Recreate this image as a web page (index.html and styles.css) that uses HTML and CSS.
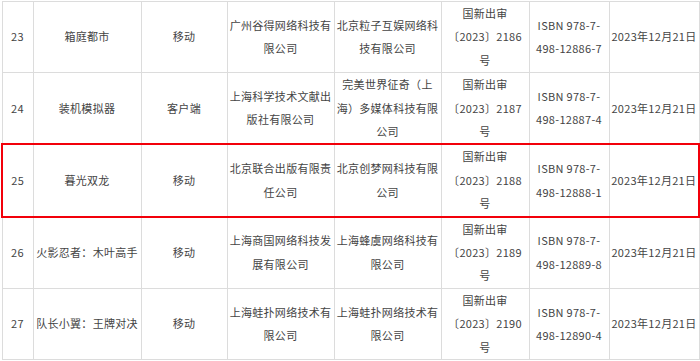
FILE: index.html
```html
<!DOCTYPE html>
<html lang="zh-CN">
<head>
<meta charset="utf-8">
<link rel="stylesheet" href="styles.css">
</head>
<body>
<table class="list">
  <colgroup>
    <col class="c-no"><col class="c-name"><col class="c-type"><col class="c-pub"><col class="c-op"><col class="c-ref"><col class="c-isbn"><col class="c-date">
  </colgroup>
  <tbody>
    <tr>
      <td>23</td><td>箱庭都市</td><td>移动</td><td>广州谷得网络科技有限公司</td><td>北京粒子互娱网络科技有限公司</td><td class="ref">国新出审〔2023〕2186号</td><td>ISBN 978-7-498-12886-7</td><td class="date">2023年12月21日</td>
    </tr>
    <tr>
      <td>24</td><td>装机模拟器</td><td>客户端</td><td>上海科学技术文献出版社有限公司</td><td>完美世界征奇（上海）多媒体科技有限公司</td><td class="ref">国新出审〔2023〕2187号</td><td>ISBN 978-7-498-12887-4</td><td class="date">2023年12月21日</td>
    </tr>
    <tr class="hl">
      <td>25</td><td>暮光双龙</td><td>移动</td><td>北京联合出版有限责任公司</td><td>北京创梦网科技有限公司</td><td class="ref">国新出审〔2023〕2188号</td><td>ISBN 978-7-498-12888-1</td><td class="date">2023年12月21日</td>
    </tr>
    <tr>
      <td>26</td><td>火影忍者：木叶高手</td><td>移动</td><td>上海商国网络科技发展有限公司</td><td>上海蜂虞网络科技有限公司</td><td class="ref">国新出审〔2023〕2189号</td><td>ISBN 978-7-498-12889-8</td><td class="date">2023年12月21日</td>
    </tr>
    <tr>
      <td>27</td><td>队长小翼：王牌对决</td><td>移动</td><td>上海蛙扑网络技术有限公司</td><td>上海蛙扑网络技术有限公司</td><td class="ref">国新出审〔2023〕2190号</td><td>ISBN 978-7-498-12890-4</td><td class="date">2023年12月21日</td>
    </tr>
  </tbody>
</table>
</body>
</html>
```
FILE: styles.css
```css
html, body {
  margin: 0;
  background: #fff;
}
body {
  padding: 1px 0 0 1px;
  font-family: "Noto Sans CJK SC", "Microsoft YaHei", sans-serif;
  font-size: 11px;
  color: #444;
}
.list {
  border-collapse: collapse;
  table-layout: fixed;
  width: 697px;
}
.c-no { width: 31px; }
.c-name { width: 108px; }
.c-type { width: 86px; }
.c-pub { width: 107px; }
.c-op { width: 107px; }
.c-ref { width: 88px; }
.c-isbn { width: 80px; }
.c-date { width: 90px; }
.list td {
  border: 1px solid #dcdcdc;
  padding: 0 2px;
  line-height: 23.4px;
  text-align: center;
  vertical-align: middle;
  letter-spacing: 0.3px;
}
.list td.ref {
  padding: 0 5px;
}
.list td.date {
  white-space: nowrap;
  padding: 0;
}
.list tr.hl td {
  border-top: 2px solid #f2000a;
  border-bottom: 2px solid #f2000a;
}
.list tr.hl td:first-child {
  border-left: 2px solid #f2000a;
}
.list tr.hl td:last-child {
  border-right: 2px solid #f2000a;
}
```
